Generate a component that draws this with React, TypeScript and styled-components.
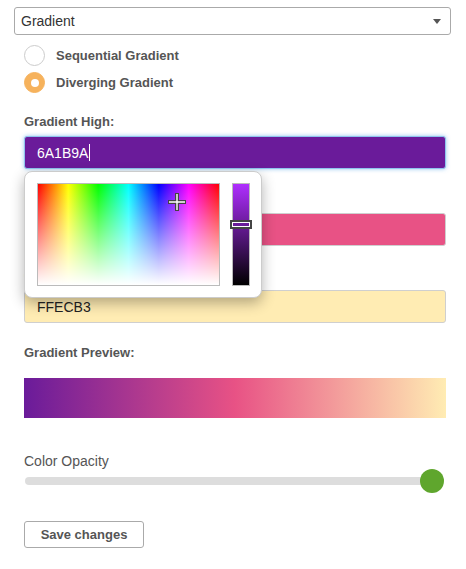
import React from "react";
import styled, { createGlobalStyle } from "styled-components";

const GlobalStyle = createGlobalStyle`
  body {
    margin: 0;
    background: #ffffff;
    font-family: "Liberation Sans", Arial, sans-serif;
  }
`;

const Page = styled.div`
  width: 466px;
  padding: 7px 15px 0 14px;
  box-sizing: border-box;
`;

//Top dropdown with the colour scheme type
const Select = styled.div`
  height: 28px;
  box-sizing: border-box;
  border: 1px solid #aaaaaa;
  border-radius: 3px;
  display: flex;
  align-items: center;
  justify-content: space-between;
  padding: 0 9px 0 6px;
  font-size: 14px;
  color: #333333;
`;

const Arrow = styled.span`
  width: 0;
  height: 0;
  border-left: 4px solid transparent;
  border-right: 4px solid transparent;
  border-top: 5px solid #555555;
`;

const RadioGroup = styled.div`
  display: flex;
  flex-direction: column;
  gap: 6px;
  padding: 10px 0 0 10px;
`;

const RadioRow = styled.label`
  display: flex;
  align-items: center;
  gap: 11px;
  font-size: 13px;
  font-weight: bold;
  color: #555555;
`;

const RadioCircle = styled.span<{ checked?: boolean }>`
  width: 21px;
  height: 21px;
  box-sizing: border-box;
  border-radius: 50%;
  display: flex;
  align-items: center;
  justify-content: center;
  border: 1px solid ${({ checked }) => (checked ? "#f6b25c" : "#cccccc")};
  background: ${({ checked }) => (checked ? "#f6b25c" : "#ffffff")};
  &::after {
    content: "";
    display: ${({ checked }) => (checked ? "block" : "none")};
    width: 8px;
    height: 8px;
    border-radius: 50%;
    background: #ffffff;
  }
`;

const Content = styled.div`
  padding: 21px 5px 0 10px;
`;

const FieldGroup = styled.div`
  position: relative;
  margin-bottom: 22px;
`;

const Label = styled.div`
  font-size: 13px;
  line-height: 16px;
  font-weight: bold;
  color: #555555;
  margin-bottom: 6px;
`;

const ColorField = styled.div<{ bg: string; fg: string; focused?: boolean }>`
  height: 33px;
  box-sizing: border-box;
  border-radius: 3px;
  padding: 0 12px;
  display: flex;
  align-items: center;
  font-size: 14px;
  background: ${({ bg }) => bg};
  color: ${({ fg }) => fg};
  border: 1px solid ${({ focused }) => (focused ? "#8fc4ee" : "#cfcfcf")};
  box-shadow: ${({ focused }) =>
    focused ? "0 0 4px rgba(102, 175, 233, 0.7)" : "none"};
`;

const Caret = styled.span`
  display: inline-block;
  width: 1px;
  height: 17px;
  background: #ffffff;
  margin-left: 1px;
`;

//Colour picker that hangs under the focused field
const Picker = styled.div`
  position: absolute;
  top: 57px;
  left: 0;
  z-index: 2;
  width: 238px;
  box-sizing: border-box;
  padding: 11px 11px 11px 12px;
  display: flex;
  gap: 12px;
  background: #ffffff;
  border: 1px solid #cccccc;
  border-radius: 8px;
  box-shadow: 0 5px 14px rgba(0, 0, 0, 0.3);
`;

const Saturation = styled.div`
  position: relative;
  width: 183px;
  height: 103px;
  box-sizing: border-box;
  border: 1px solid #bbbbbb;
  background: linear-gradient(to bottom, rgba(255, 255, 255, 0), #ffffff),
    linear-gradient(
      to right,
      #ff0000,
      #ffff00 16.7%,
      #00ff00 33.3%,
      #00ffff 50%,
      #0000ff 66.7%,
      #ff00ff 83.3%,
      #ff0000
    );
`;

const Crosshair = styled.svg`
  position: absolute;
  left: 129px;
  top: 8px;
`;

const Brightness = styled.div`
  position: relative;
  width: 18px;
  height: 103px;
  box-sizing: border-box;
  border: 1px solid #bbbbbb;
  background: linear-gradient(to bottom, #af2eff, #000000);
`;

const BrightnessHandle = styled.div`
  position: absolute;
  left: -3px;
  right: -3px;
  top: 36px;
  height: 9px;
  box-sizing: border-box;
  border: 2px solid #444444;
  background: #6a1b9a;
  box-shadow: inset 0 0 0 1px #ffffff;
`;

const PreviewBar = styled.div`
  height: 40px;
  margin: 17px 0 36px;
  background: linear-gradient(to right, #6a1b9a, #e85285 50%, #ffecb3);
`;

const OpacityLabel = styled.div`
  font-size: 14px;
  line-height: 15px;
  color: #555555;
`;

const Slider = styled.div`
  position: relative;
  height: 24px;
  display: flex;
  align-items: center;
`;

const Track = styled.div`
  width: 416px;
  margin-left: 1px;
  height: 8px;
  border-radius: 4px;
  background: #dddddd;
`;

const Thumb = styled.div`
  position: absolute;
  left: 396px;
  top: 0;
  width: 24px;
  height: 24px;
  border-radius: 50%;
  background: #5fa62d;
`;

const Button = styled.button`
  margin-top: 28px;
  width: 120px;
  height: 27px;
  box-sizing: border-box;
  border: 1px solid #aaaaaa;
  border-radius: 3px;
  background: #ffffff;
  font-family: "Liberation Sans", Arial, sans-serif;
  font-size: 13px;
  font-weight: bold;
  color: #555555;
  padding: 0;
`;

export default function App() {
  return (
    <>
      <GlobalStyle />
      <Page>
        <Select>
          <span>Gradient</span>
          <Arrow />
        </Select>
        <RadioGroup>
          <RadioRow>
            <RadioCircle />
            Sequential Gradient
          </RadioRow>
          <RadioRow>
            <RadioCircle checked />
            Diverging Gradient
          </RadioRow>
        </RadioGroup>
        <Content>
          <FieldGroup>
            <Label>Gradient High:</Label>
            <ColorField bg="#6a1b9a" fg="#ffffff" focused>
              6A1B9A
              <Caret />
            </ColorField>
            <Picker>
              <Saturation>
                <Crosshair width="20" height="20" viewBox="0 0 20 20">
                  <path
                    d="M10 1v18M1 10h18"
                    stroke="#444444"
                    strokeWidth="4"
                  />
                  <path
                    d="M10 2v16M2 10h16"
                    stroke="#ffffff"
                    strokeWidth="1.4"
                  />
                </Crosshair>
              </Saturation>
              <Brightness>
                <BrightnessHandle />
              </Brightness>
            </Picker>
          </FieldGroup>
          <FieldGroup>
            <Label>Gradient Mid:</Label>
            <ColorField bg="#e85285" fg="#ffffff">
              E85285
            </ColorField>
          </FieldGroup>
          <FieldGroup>
            <Label>Gradient Low:</Label>
            <ColorField bg="#ffecb3" fg="#222222">
              FFECB3
            </ColorField>
          </FieldGroup>
          <Label>Gradient Preview:</Label>
          <PreviewBar />
          <OpacityLabel>Color Opacity</OpacityLabel>
          <Slider>
            <Track />
            <Thumb />
          </Slider>
          <Button>Save changes</Button>
        </Content>
      </Page>
    </>
  );
}
